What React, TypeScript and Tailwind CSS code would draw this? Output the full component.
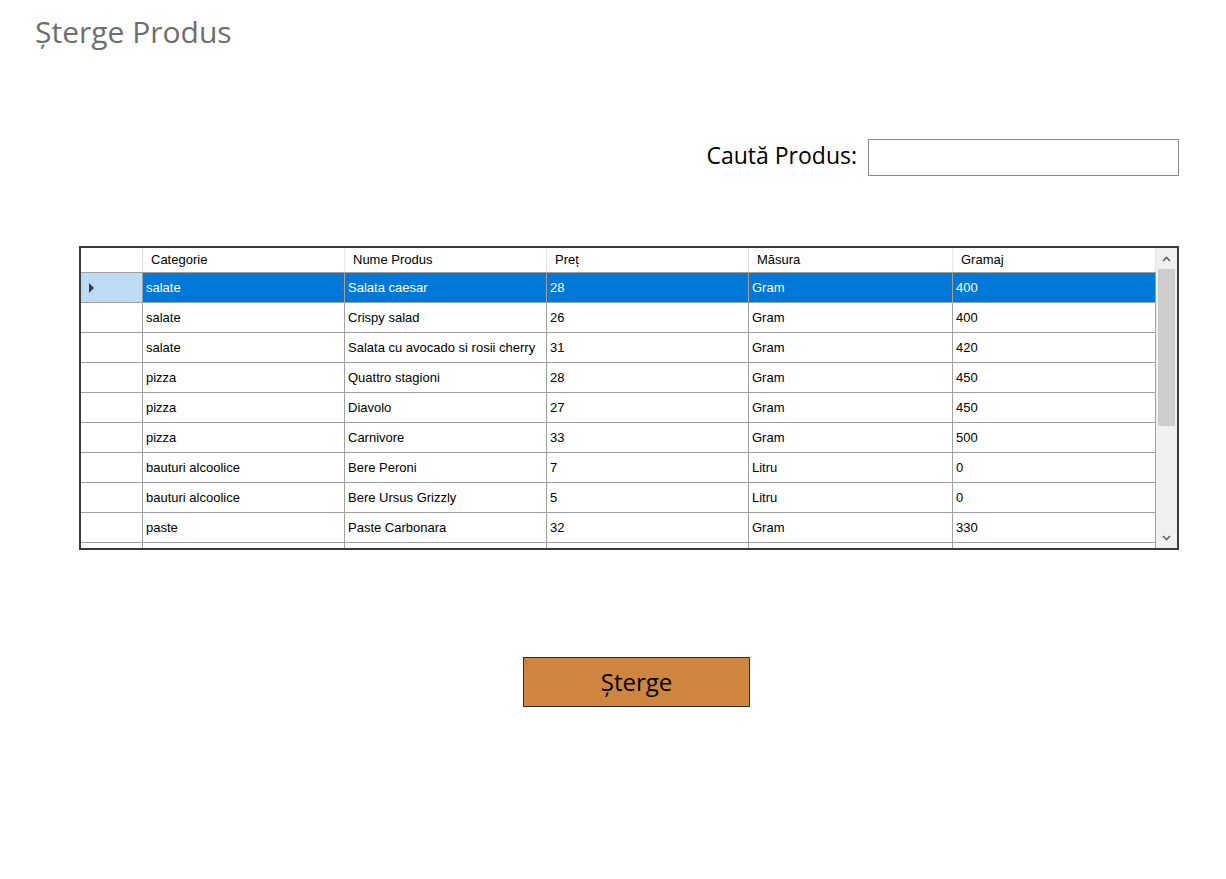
import React from "react";

type Row = {
  categorie: string;
  nume: string;
  pret: string;
  masura: string;
  gramaj: string;
};

const rows: Row[] = [
  { categorie: "salate", nume: "Salata caesar", pret: "28", masura: "Gram", gramaj: "400" },
  { categorie: "salate", nume: "Crispy salad", pret: "26", masura: "Gram", gramaj: "400" },
  { categorie: "salate", nume: "Salata cu avocado si rosii cherry", pret: "31", masura: "Gram", gramaj: "420" },
  { categorie: "pizza", nume: "Quattro stagioni", pret: "28", masura: "Gram", gramaj: "450" },
  { categorie: "pizza", nume: "Diavolo", pret: "27", masura: "Gram", gramaj: "450" },
  { categorie: "pizza", nume: "Carnivore", pret: "33", masura: "Gram", gramaj: "500" },
  { categorie: "bauturi alcoolice", nume: "Bere Peroni", pret: "7", masura: "Litru", gramaj: "0" },
  { categorie: "bauturi alcoolice", nume: "Bere Ursus Grizzly", pret: "5", masura: "Litru", gramaj: "0" },
  { categorie: "paste", nume: "Paste Carbonara", pret: "32", masura: "Gram", gramaj: "330" },
  // rows below the fold: only their grid lines peek out
  { categorie: "", nume: "", pret: "", masura: "", gramaj: "" },
  { categorie: "", nume: "", pret: "", masura: "", gramaj: "" },
];

const cols = "grid grid-cols-[62px_202px_202px_202px_204px_203px]";
const comic = "font-['Comic_Sans_MS','Open_Sans',sans-serif]";

function Chevron({ up }: { up?: boolean }) {
  return (
    <svg width="9" height="6" viewBox="0 0 9 6">
      <polyline
        points={up ? "1,5 4.5,1.5 8,5" : "1,1 4.5,4.5 8,1"}
        fill="none"
        stroke="#606060"
        strokeWidth="1.6"
      />
    </svg>
  );
}

export default function App() {
  return (
    <div className="h-[879px] w-[1226px] overflow-hidden bg-white">
      <h1 className={`${comic} pl-[35px] pt-[11px] text-[30px] leading-[42px] text-[#6e6e6e]`}>
        Șterge Produs
      </h1>

      <div className="mt-[86px] flex items-center justify-end gap-[11px] pr-[47px]">
        <span className={`${comic} pb-[5px] text-[23px] leading-[30px] text-black`}>Caută Produs:</span>
        <input
          type="text"
          className="h-[37px] w-[311px] border border-[#8a8a8a] bg-white outline-none"
        />
      </div>

      <div className="ml-[79px] mt-[70px] flex h-[304px] w-[1100px] border-2 border-[#3a3a3a] bg-white font-['Liberation_Sans',Arial,sans-serif] text-[13px] text-black">
        <div className="flex-1 overflow-hidden">
          <div className={`${cols} h-[25px] border-b border-[#a0a0a0]`}>
            <div className="border-r border-[#d8d8d8]" />
            {["Categorie", "Nume Produs", "Preț", "Măsura", "Gramaj"].map((h) => (
              <div key={h} className="flex items-center border-r border-[#e4e4e4] pl-[8px]">
                {h}
              </div>
            ))}
          </div>
          {rows.map((r, i) => {
            const selected = i === 0;
            return (
              <div key={i} className={`${cols} h-[30px] border-b border-[#a0a0a0]`}>
                <div
                  className={`flex items-center border-r border-[#a0a0a0] pl-[8px] ${
                    selected ? "bg-[#bcdcf4]" : "bg-white"
                  }`}
                >
                  {selected && (
                    <svg width="6" height="10" viewBox="0 0 6 10">
                      <polygon points="0,0 5,5 0,10" fill="#3a3a3a" />
                    </svg>
                  )}
                </div>
                {[r.categorie, r.nume, r.pret, r.masura, r.gramaj].map((v, j) => (
                  <div
                    key={j}
                    className={`flex items-center overflow-hidden whitespace-nowrap border-r border-[#a0a0a0] pl-[3px] ${
                      selected ? "bg-[#0078d7] text-white" : ""
                    }`}
                  >
                    {v}
                  </div>
                ))}
              </div>
            );
          })}
        </div>

        <div className="flex w-[21px] flex-col bg-[#f0f0f0]">
          <div className="flex h-[21px] items-center justify-center">
            <Chevron up />
          </div>
          <div className="flex-1 px-[2px]">
            <div className="h-[157px] bg-[#cdcdcd]" />
          </div>
          <div className="flex h-[21px] items-center justify-center">
            <Chevron />
          </div>
        </div>
      </div>

      <div className="mt-[107px] pl-[523px]">
        <button
          className={`${comic} h-[50px] w-[227px] border border-[#2e2e2e] bg-[#cd853f] text-[24px] text-black`}
        >
          Șterge
        </button>
      </div>
    </div>
  );
}
